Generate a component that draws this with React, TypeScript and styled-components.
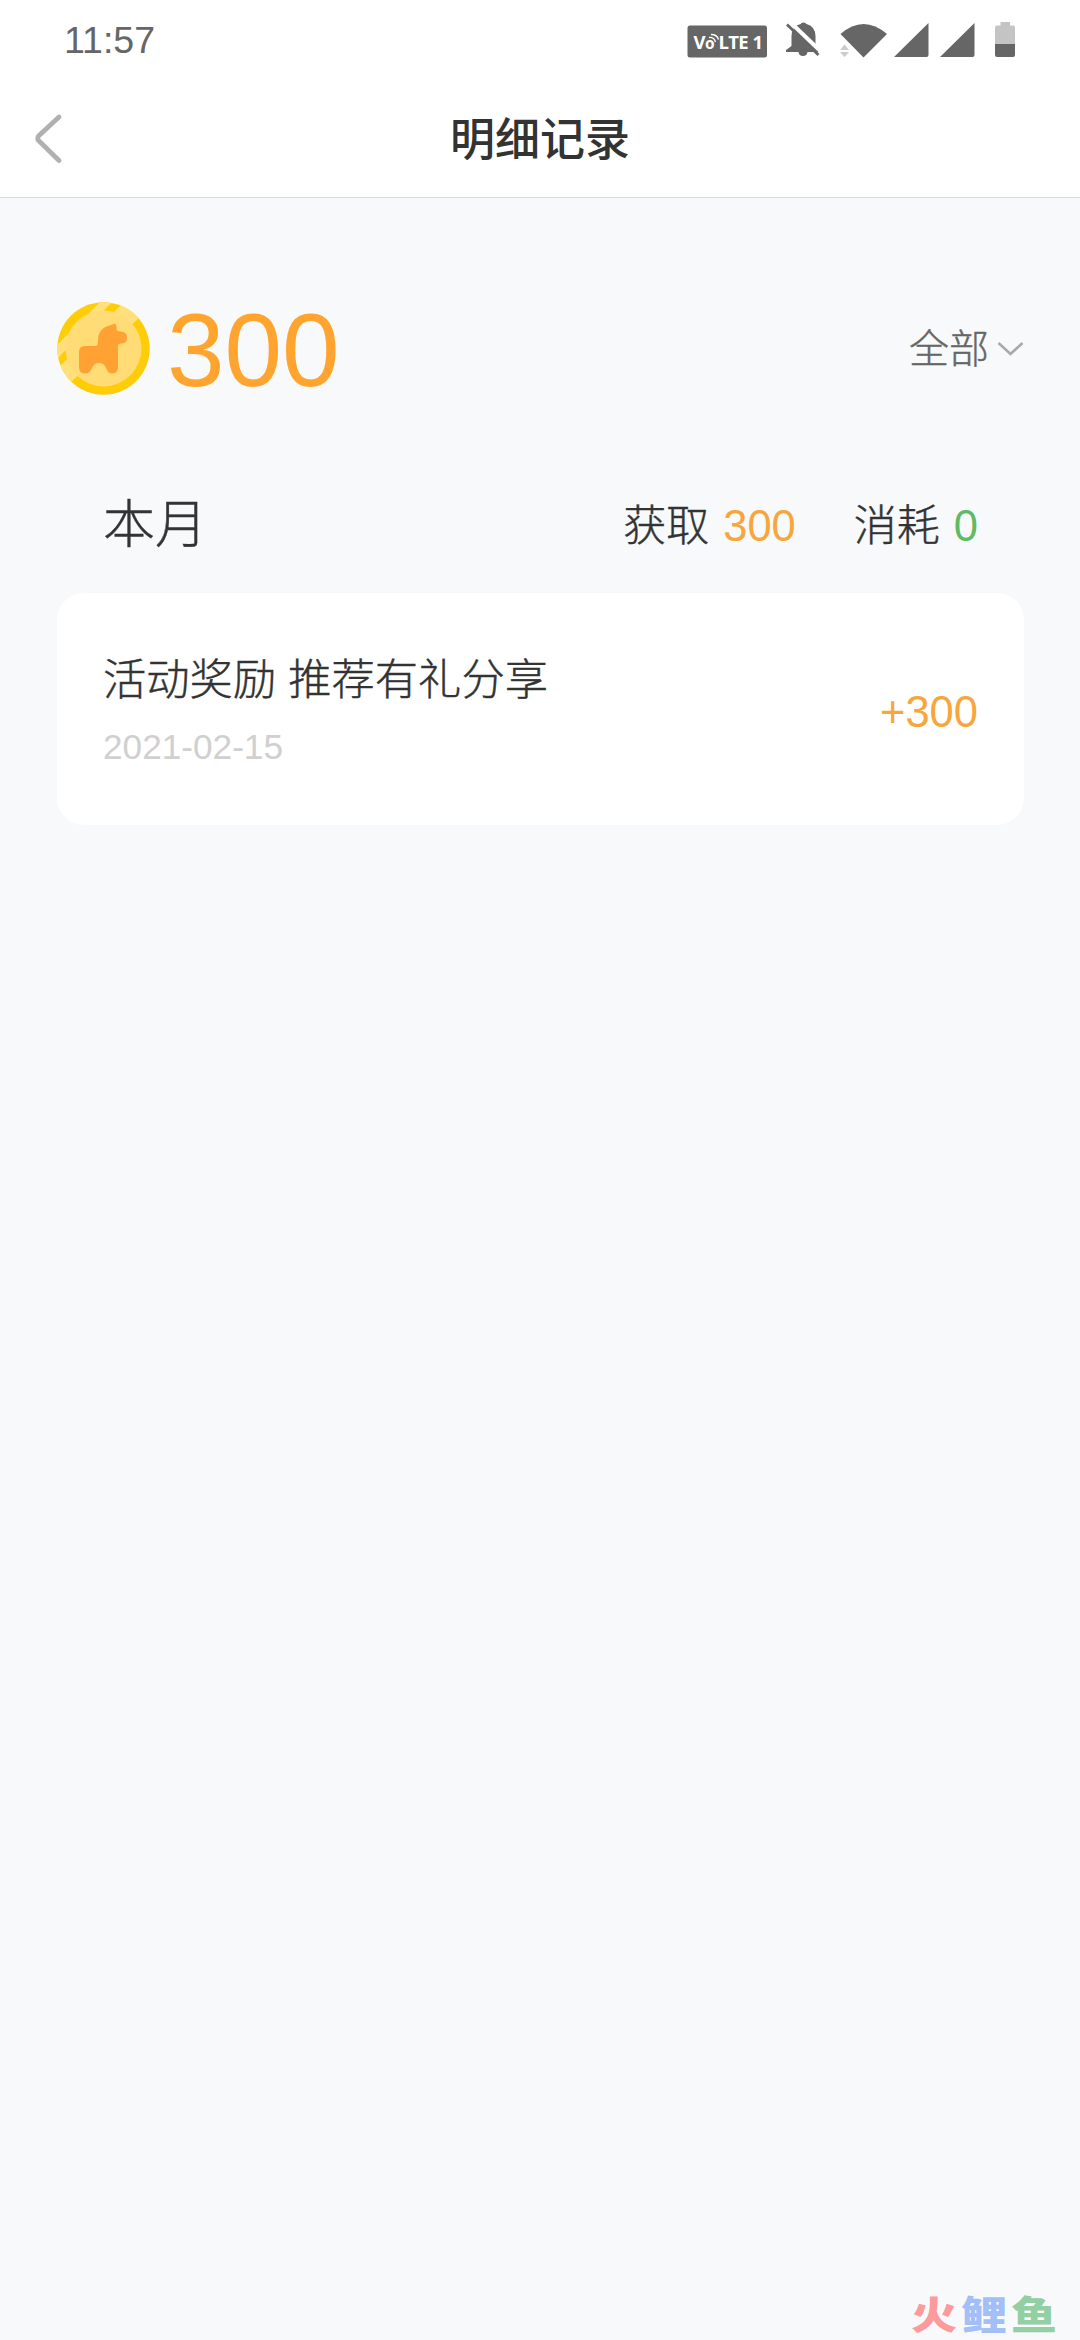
import React from "react";
import styled, { createGlobalStyle } from "styled-components";

const GlobalStyle = createGlobalStyle`
  * { box-sizing: border-box; }
  body {
    margin: 0;
    background: #f7f9fb;
    font-family: "Liberation Sans", "Noto Sans CJK SC", sans-serif;
    color: #333;
  }
`;

const Screen = styled.main`
  position: relative;
  display: flex;
  flex-direction: column;
  width: 1080px;
  height: 2340px;
  overflow: hidden;
  background: #f7f9fb;
`;

const TopArea = styled.header`
  height: 198px;
  background: #fff;
  border-bottom: 1px solid #d8dadc;
`;

const StatusBar = styled.div`
  display: flex;
  justify-content: space-between;
  height: 80px;
  padding: 0 64px;
`;

const Clock = styled.time`
  font-size: 37.5px;
  line-height: 81px;
  color: #666;
`;

const StatusIcons = styled.svg`
  display: block;
  width: 340px;
  height: 80px;
`;

const NavBar = styled.nav`
  display: grid;
  grid-template-columns: 100px 1fr 100px;
  align-items: center;
  height: 117px;
`;

const BackButton = styled.button`
  display: flex;
  width: 100px;
  height: 117px;
  padding: 0;
  border: 0;
  background: none;
`;

const Title = styled.h1`
  margin: 0;
  padding-top: 4px;
  text-align: center;
  font-size: 45px;
  font-weight: 500;
  line-height: 113px;
  color: #333;
`;

const Content = styled.section`
  padding: 0 56px 0 57px;
`;

const Summary = styled.div`
  display: flex;
  align-items: center;
  justify-content: space-between;
  height: 300px;
`;

const Balance = styled.div`
  display: flex;
  align-items: center;
  gap: 17px;
`;

const BalanceValue = styled.strong`
  padding-top: 4px;
  font-size: 103.5px;
  font-weight: 400;
  line-height: 120px;
  color: #ffa52f;
`;

const Filter = styled.button`
  display: flex;
  align-items: center;
  gap: 8px;
  padding: 2px 0 0;
  border: 0;
  background: none;
  font: 300 40px/60px "Liberation Sans", "Noto Sans CJK SC", sans-serif;
  -webkit-text-stroke: 0.4px #666;
  color: #666;
`;

const MonthHeader = styled.div`
  display: flex;
  align-items: center;
  justify-content: space-between;
  height: 60px;
  margin: -3px 0 38px;
  padding: 0 46px;
  font-weight: 300;
`;

const MonthName = styled.h2`
  margin: 0;
  font-size: 52px;
  font-weight: 300;
  line-height: 60px;
  -webkit-text-stroke: 0.4px #333;
`;

const Totals = styled.div`
  display: flex;
  gap: 58px;
  padding-top: 2px;
`;

const Total = styled.span`
  display: flex;
  gap: 14px;
  font-size: 43px;
  line-height: 60px;
  -webkit-text-stroke: 0.4px #333;
`;

const Amount = styled.span<{ $tone: "gain" | "spend" }>`
  font-size: 43.5px;
  line-height: 60px;
  -webkit-text-stroke: 0;
  color: ${({ $tone }) => ($tone === "gain" ? "#f7a63c" : "#5fba62")};
`;

const Card = styled.article`
  display: flex;
  align-items: center;
  justify-content: space-between;
  height: 232px;
  padding: 5px 46px 0;
  border-radius: 27px;
  background: #fff;
`;

const Entry = styled.div`
  display: flex;
  flex-direction: column;
  gap: 5px;
  padding-top: 2px;
`;

const EntryTitle = styled.span`
  font-size: 43.3px;
  font-weight: 300;
  line-height: 64px;
  -webkit-text-stroke: 0.4px #333;
`;

const EntryDate = styled.time`
  font-size: 35.2px;
  line-height: 60px;
  color: #d0d0d0;
`;

const Watermark = styled.div`
  position: absolute;
  right: 23px;
  bottom: 0;
  display: flex;
  gap: 4px;
  font-family: "Noto Sans CJK SC", sans-serif;
  font-size: 46px;
  font-weight: 900;
  line-height: 56px;
  transform: scaleY(0.84);
`;

const Mark = styled.span<{ $color: string }>`
  color: ${({ $color }) => $color};
`;

const Coin = () => (
  <svg width="93" height="93" viewBox="0 0 93 93">
    <defs>
      <clipPath id="coin">
        <circle cx="46.5" cy="46.5" r="46.2" />
      </clipPath>
    </defs>
    <circle cx="46.5" cy="46.5" r="46.2" fill="#ffcc08" />
    <g clipPath="url(#coin)" fill="#ffe07a">
      <path d="M44 -1L56 -1L-1 58L-1 44Z" />
      <path d="M66 1L84 14L14 80L1 66Z" />
    </g>
    <circle cx="46.5" cy="46.5" r="38" fill="#ffdc75" />
    <path
      fill="#ffa133"
      d="M22 50Q22 44 28 44H38Q41 44 41 40V38Q41 26 54 23L58 21.5Q59.500 22 59.500 25V28Q61 29.500 64 29.500Q70 30 70 35.500Q70 41.500 64 41.500Q61 41.500 61 44V65Q61 71.500 55 71.500Q51 71.500 49 66Q47 61 42 61Q37 61 35 66Q33 71.500 28 71.500Q22 71.500 22 65Z"
    />
  </svg>
);

const StatusGlyphs = () => (
  <StatusIcons viewBox="676 0 340 80">
    <rect x="687.5" y="25.5" width="79.5" height="32" rx="2.5" fill="#666" />
    <g fill="#fff" fontFamily="Open Sans" fontWeight="700">
      <text x="693.5" y="49" fontSize="18.5">V</text>
      <text x="705" y="49" fontSize="15.5">o</text>
      <text x="718.5" y="49" fontSize="18.5" textLength="30">LTE</text>
      <text x="752.5" y="49" fontSize="18.5">1</text>
    </g>
    <g fill="none" stroke="#fff" strokeWidth="1.3">
      <path d="M709 37.500Q714 37 715.500 42" />
      <path d="M711 34.500Q717 34.500 718.500 39.500" />
    </g>
    <path
      fill="#666"
      d="M786 52V50L791.500 46V36Q792 26 800.500 24Q801.500 22.500 803.500 22.500Q805.500 22.500 806.500 24Q815 26 815.500 36V46L820.500 50V52Z"
    />
    <path fill="#666" d="M798.500 52H807.500Q807 56 803 56Q799 56 798.500 52Z" />
    <path d="M789.500 21.500L822.500 53" stroke="#fff" strokeWidth="4" />
    <path d="M787 24.500L818.500 55" stroke="#666" strokeWidth="2.8" />
    <path fill="#666" d="M840.500 34Q863.500 14 887 34L863.500 57.500Z" />
    <path fill="#ccc" d="M840 50L844.500 44.500L849 50ZM840 52L844.500 57L849 52Z" />
    <path fill="#666" d="M928.500 23V55Q928.500 57 926.500 57H894ZM974.500 23V55Q974.500 57 972.500 57H940Z" />
    <path fill="#c4c4c4" d="M1000.500 22H1010V25.500H1013Q1015 25.500 1015 27.500V44H995V27.500Q995 25.500 997 25.500H1000.500Z" />
    <path fill="#666" d="M995 44H1015V55Q1015 57 1013 57H997Q995 57 995 55Z" />
  </StatusIcons>
);

export default function App() {
  return (
    <>
      <GlobalStyle />
      <Screen>
        <TopArea>
          <StatusBar>
            <Clock>11:57</Clock>
            <StatusGlyphs />
          </StatusBar>
          <NavBar>
            <BackButton aria-label="返回">
              <svg width="100" height="117" viewBox="0 80 100 117">
                <path
                  d="M59 117L38.500 136Q37 138.500 38.500 140.500L59 160.500"
                  fill="none"
                  stroke="#b0b0b0"
                  strokeWidth="4.8"
                  strokeLinecap="round"
                />
              </svg>
            </BackButton>
            <Title>明细记录</Title>
          </NavBar>
        </TopArea>
        <Content>
          <Summary>
            <Balance>
              <Coin />
              <BalanceValue>300</BalanceValue>
            </Balance>
            <Filter>
              全部
              <svg width="27" height="16" viewBox="0 0 27 16">
                <path d="M1.500 2L13.500 13L25.500 2" fill="none" stroke="#aaa" strokeWidth="2.6" />
              </svg>
            </Filter>
          </Summary>
          <MonthHeader>
            <MonthName>本月</MonthName>
            <Totals>
              <Total>
                获取<Amount $tone="gain">300</Amount>
              </Total>
              <Total>
                消耗<Amount $tone="spend">0</Amount>
              </Total>
            </Totals>
          </MonthHeader>
          <Card>
            <Entry>
              <EntryTitle>活动奖励 推荐有礼分享</EntryTitle>
              <EntryDate>2021-02-15</EntryDate>
            </Entry>
            <Amount $tone="gain">+300</Amount>
          </Card>
        </Content>
        <Watermark>
          <Mark $color="#fc9a9c">火</Mark>
          <Mark $color="#a3bff8">鲤</Mark>
          <Mark $color="#92cfa3">鱼</Mark>
        </Watermark>
      </Screen>
    </>
  );
}
